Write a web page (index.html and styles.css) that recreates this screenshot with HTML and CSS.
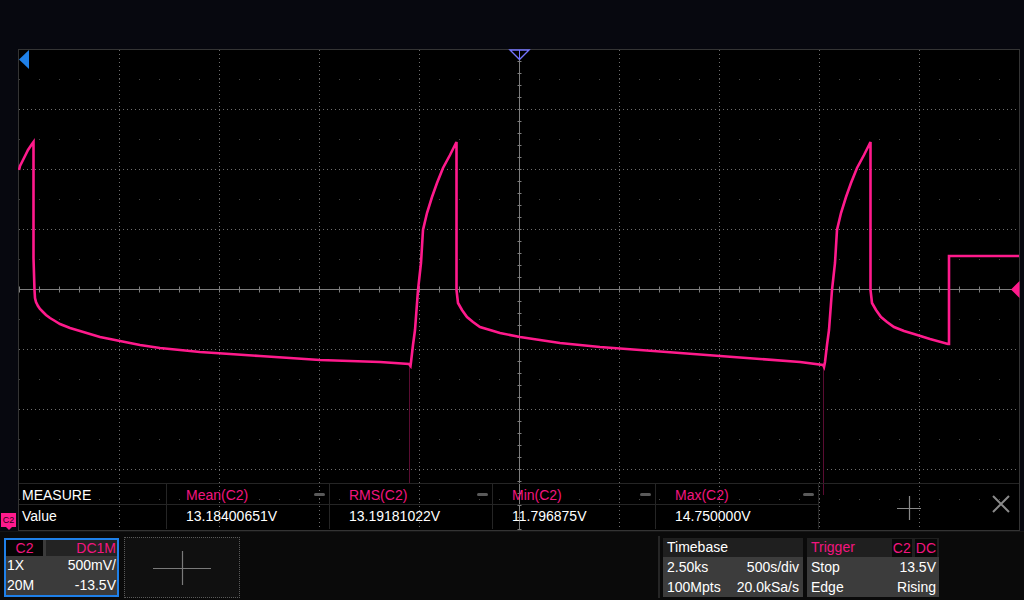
FILE: index.html
```html
<!DOCTYPE html>
<html lang="en">
<head>
    <meta charset="UTF-8">
    <title>Oscilloscope</title>
    <link rel="stylesheet" href="styles.css">
</head>
<body>
<div class="scope">
    <div class="topbar"></div>

    <div class="main">
        <div class="gutter">
            <div class="ch-badge">C2</div>
        </div>

        <div class="screen">
            <svg class="grid" width="1002" height="482" viewBox="18 49 1002 482">
                <!-- minor dots -->
                <g stroke="#484848" stroke-width="1" stroke-dasharray="1 19">
                    <line x1="19" y1="79.5" x2="1019" y2="79.5"/>
                    <line x1="19" y1="139.5" x2="1019" y2="139.5"/>
                    <line x1="19" y1="199.5" x2="1019" y2="199.5"/>
                    <line x1="19" y1="259.5" x2="1019" y2="259.5"/>
                    <line x1="19" y1="319.5" x2="1019" y2="319.5"/>
                    <line x1="19" y1="379.5" x2="1019" y2="379.5"/>
                    <line x1="19" y1="439.5" x2="1019" y2="439.5"/>
                    <line x1="19" y1="499.5" x2="1019" y2="499.5"/>
                </g>
                <!-- dotted divisions -->
                <g stroke="#6e6e6e" stroke-width="1" stroke-dasharray="1 3">
                    <line x1="119.5" y1="50" x2="119.5" y2="530"/>
                    <line x1="219.5" y1="50" x2="219.5" y2="530"/>
                    <line x1="319.5" y1="50" x2="319.5" y2="530"/>
                    <line x1="419.5" y1="50" x2="419.5" y2="530"/>
                    <line x1="619.5" y1="50" x2="619.5" y2="530"/>
                    <line x1="719.5" y1="50" x2="719.5" y2="530"/>
                    <line x1="819.5" y1="50" x2="819.5" y2="530"/>
                    <line x1="919.5" y1="50" x2="919.5" y2="530"/>
                    <line x1="19" y1="109.5" x2="1019" y2="109.5"/>
                    <line x1="19" y1="169.5" x2="1019" y2="169.5"/>
                    <line x1="19" y1="229.5" x2="1019" y2="229.5"/>
                    <line x1="19" y1="349.5" x2="1019" y2="349.5"/>
                    <line x1="19" y1="409.5" x2="1019" y2="409.5"/>
                    <line x1="19" y1="469.5" x2="1019" y2="469.5"/>
                </g>
                <!-- center axes -->
                <g stroke="#7d7d7d">
                    <line x1="19" y1="289.5" x2="1019" y2="289.5" stroke-width="1"/>
                    <line x1="519.5" y1="50" x2="519.5" y2="530" stroke-width="1"/>
                    <line x1="19" y1="289.5" x2="1020" y2="289.5" stroke-width="6" stroke-dasharray="1 19"/>
                    <line x1="519.5" y1="49" x2="519.5" y2="531" stroke-width="4" stroke-dasharray="1 11"/>
                </g>
                <rect x="18.5" y="49.5" width="1001" height="481" fill="none" stroke="#343434"/>

                <!-- trace -->
                <g stroke="#5a0c32" stroke-width="1">
                    <line x1="409.5" y1="366" x2="409.5" y2="483"/>
                    <line x1="823.5" y1="367" x2="823.5" y2="495"/>
                </g>
                <polyline class="trace" points="19,170 20,166 22,162 24,158 26,154 28,150 30,147 32,144 33.5,142 33.5,258 34.5,290 35,298 36,302 38,306 40,309 43,312 46,315 50,318 55,321 60,324 70,328 80,331 90,334 100,337 120,341 140,345 160,348 180,350 200,352 230,354 260,356 290,358 320,360 350,361 380,362 409,364 410.5,366 411,362 413,345 415,330 418,290 421,263 423,230 427,213 432,197 437,183 443,168 450,155 456.5,142 456.5,290 458,303 462,310 467,317 473,322 480,327 490,330 500,333 520,337 540,340 560,343 580,345 600,347 640,350 680,353 720,356 760,359 800,362 823,365 824,367 825,362 827,345 829,330 832,290 835,263 837,230 841,213 846,197 851,183 857,168 864,155 870.5,142 870.5,290 872,303 876,310 881,317 887,322 894,327 904,331 914,334 930,339 948,344 949,344 949,256 1019,256"/>

                <!-- markers -->
                <polygon points="19,59.5 29,50 29,69" fill="#1f80e8"/>
                <polygon points="510,50 529,50 519.5,59.5" fill="#000" stroke="#7474ff" stroke-width="1.4"/>
                <line x1="519.5" y1="50" x2="519.5" y2="59" stroke="#7474ff" stroke-width="1"/>
                <polygon points="1011,289.5 1019.5,281 1019.5,298" fill="#ff1a8c"/>
            </svg>

            <div class="measure">
                <div class="m-col m-first">
                    <div class="m-head">MEASURE</div>
                    <div class="m-val">Value</div>
                </div>
                <div class="m-col">
                    <div class="m-head pink">Mean(C2)<span class="m-dash"></span></div>
                    <div class="m-val">13.18400651V</div>
                </div>
                <div class="m-col">
                    <div class="m-head pink">RMS(C2)<span class="m-dash"></span></div>
                    <div class="m-val">13.19181022V</div>
                </div>
                <div class="m-col">
                    <div class="m-head pink">Min(C2)<span class="m-dash"></span></div>
                    <div class="m-val">11.796875V</div>
                </div>
                <div class="m-col">
                    <div class="m-head pink">Max(C2)<span class="m-dash"></span></div>
                    <div class="m-val">14.750000V</div>
                </div>
                <div class="m-tools">
                    <svg class="m-add" width="24" height="24" viewBox="0 0 24 24">
                        <path d="M0 12.5H24M12.5 0V24" stroke="#8a8a8a" stroke-width="1.2"/>
                    </svg>
                    <svg class="m-close" width="20" height="20" viewBox="0 0 20 20">
                        <path d="M2 2L18 18M18 2L2 18" stroke="#8a8a8a" stroke-width="2"/>
                    </svg>
                </div>
            </div>
        </div>

        <div class="gutter-r"></div>
    </div>

    <div class="bottombar">
        <div class="chan">
            <div class="chan-head">
                <span class="chan-name">C2</span>
                <span class="chan-coup">DC1M</span>
            </div>
            <div class="row"><span>1X</span><span>500mV/</span></div>
            <div class="row"><span>20M</span><span>-13.5V</span></div>
        </div>

        <div class="add-box">
            <svg width="58" height="34" viewBox="0 0 58 34">
                <path d="M0 17.5H58M29.5 0V34" stroke="#7a7a7a" stroke-width="1.2"/>
            </svg>
        </div>

        <div class="sep"></div>

        <div class="info timebase">
            <div class="info-head">Timebase</div>
            <div class="row"><span>2.50ks</span><span>500s/div</span></div>
            <div class="row"><span>100Mpts</span><span>20.0kSa/s</span></div>
        </div>

        <div class="info trigger">
            <div class="info-head">
                <span class="pink">Trigger</span>
                <span class="tag-wrap"><span class="tag">C2</span><span class="tag">DC</span></span>
            </div>
            <div class="row"><span>Stop</span><span>13.5V</span></div>
            <div class="row"><span>Edge</span><span>Rising</span></div>
        </div>
    </div>
</div>
</body>
</html>
```

FILE: styles.css
```css
body { margin: 0; background: #000; font-family: "Liberation Sans", Arial, sans-serif; font-size: 14px; color: #fff; }
.scope { width: 1024px; height: 600px; display: flex; flex-direction: column; background: #07080f; overflow: hidden; }
.pink { color: #f2157f; }

.topbar { height: 49px; flex: none; }

.main { display: flex; height: 482px; flex: none; }
.gutter { width: 18px; flex: none; display: flex; flex-direction: column; justify-content: flex-end; align-items: flex-start; padding-bottom: 4px; box-sizing: border-box; }
.ch-badge { position: relative; margin-left: 1px; width: 15px; height: 14px; background: #ff1a8c; color: #2a0014; font-size: 9px; line-height: 14px; text-align: center; }
.ch-badge::after { content: ""; position: absolute; left: 5px; bottom: -3px; border-left: 3px solid transparent; border-right: 3px solid transparent; border-top: 3px solid #ff1a8c; }
.screen { position: relative; width: 1002px; height: 482px; flex: none; background: #000; }
.grid { display: block; }
.trace { fill: none; stroke: #ff1a8c; stroke-width: 2.6; stroke-linejoin: miter; }
.gutter-r { flex: 1; }

/* measure table */
.measure { position: absolute; left: 1px; top: 434px; width: 1000px; height: 46px; display: flex; border-top: 1px solid #252525; box-sizing: border-box; }
.m-col { width: 163px; flex: none; border-left: 1px solid #252525; box-sizing: border-box; }
.m-first { width: 147px; border-left: none; }
.m-head { position: relative; height: 21px; line-height: 22px; padding-left: 19px; border-bottom: 1px solid #252525; box-sizing: border-box; }
.m-val { height: 24px; line-height: 23px; padding-left: 19px; }
.m-first .m-head, .m-first .m-val { padding-left: 3px; }
.m-dash { position: absolute; right: 4px; top: 9px; width: 11px; height: 3px; border-radius: 2px; background: #5a5a5a; }
.m-tools { flex: 1; display: flex; align-items: center; padding-left: 78px; border-left: 1px solid #252525; }
.m-add { display: block; margin-top: 2px; }
.m-close { display: block; margin-left: 70px; margin-top: -6px; }

/* bottom bar */
.bottombar { flex: 1; display: flex; align-items: flex-start; padding: 6px 85px 0 4px; background: #0a0a0a; border-top: 1px solid #151515; }
.row { display: flex; justify-content: space-between; height: 20px; line-height: 20px; padding: 0 3px 0 3px; }

.chan { width: 115px; height: 59px; border: 2px solid #1f80e8; background: #3b3b3b; box-sizing: border-box; }
.chan-head { display: flex; gap: 3px; height: 16px; line-height: 16px; }
.chan-name { width: 37px; background: #050505; color: #f2157f; text-align: center; }
.chan-coup { flex: 1; background: #232323; color: #f2157f; text-align: right; padding-right: 1px; }
.chan .row { height: 19.5px; line-height: 19px; padding: 0 1px; }

.add-box { width: 116px; height: 61px; margin: -1px 0 0 5px; border: 1px dotted #5a5a5a; background: #101010; box-sizing: border-box; display: flex; align-items: center; justify-content: center; }
.add-box svg { display: block; }

.sep { width: 2px; height: 62px; margin: -2px 0 0 auto; background: #262626; }

.info { height: 59px; background: #3c3c3c; box-sizing: border-box; }
.timebase { width: 140px; margin-left: 3px; }
.trigger { width: 132px; margin-left: 4px; }
.info-head { display: flex; justify-content: space-between; align-items: center; height: 19px; line-height: 19px; padding: 0 2px 0 4px; background: #1f1f1f; }
.info .row { padding: 0 4px 0 4px; }
.trigger .row { padding: 0 3px 0 4px; }
.tag-wrap { display: flex; gap: 3px; }
.tag { height: 18px; line-height: 18px; padding: 0 1px; background: #080808; color: #f2157f; }
```
